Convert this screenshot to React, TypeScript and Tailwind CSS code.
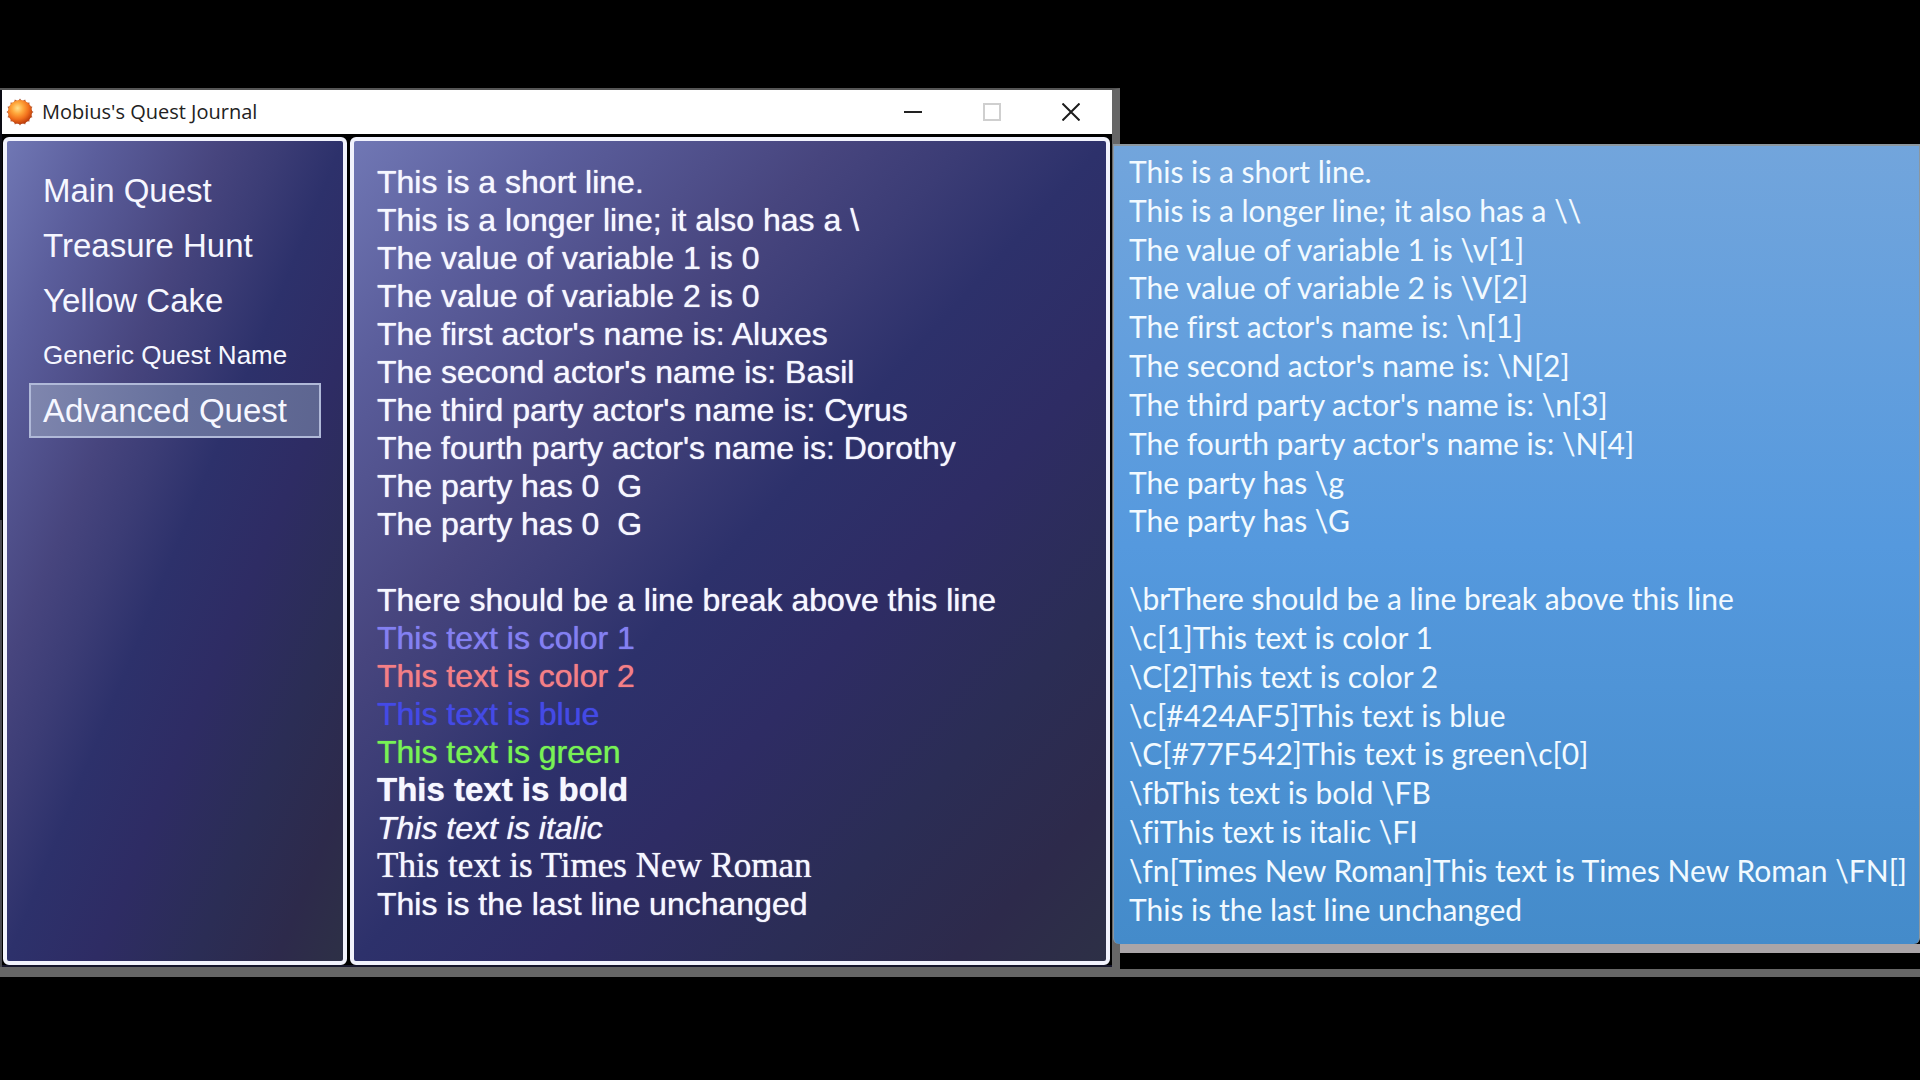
import { useState } from "react";

const quests = ["Main Quest", "Treasure Hunt", "Yellow Cake", "Generic Quest Name", "Advanced Quest"];

const journalLines: { text: string; style?: string }[] = [
  { text: "This is a short line." },
  { text: "This is a longer line; it also has a \\" },
  { text: "The value of variable 1 is 0" },
  { text: "The value of variable 2 is 0" },
  { text: "The first actor's name is: Aluxes" },
  { text: "The second actor's name is: Basil" },
  { text: "The third party actor's name is: Cyrus" },
  { text: "The fourth party actor's name is: Dorothy" },
  { text: "The party has 0  G" },
  { text: "The party has 0  G" },
  { text: "" },
  { text: "There should be a line break above this line" },
  { text: "This text is color 1", style: "text-[#8380f2]" },
  { text: "This text is color 2", style: "text-[#f47f86]" },
  { text: "This text is blue", style: "text-[#444ae6]" },
  { text: "This text is green", style: "text-[#77f255]" },
  { text: "This text is bold", style: "font-bold text-[33px]" },
  { text: "This text is italic", style: "italic" },
  { text: "This text is Times New Roman", style: "font-['Liberation_Serif',serif] text-[35px]" },
  { text: "This is the last line unchanged" },
];

const sourceLines = [
  "This is a short line.",
  "This is a longer line; it also has a \\\\",
  "The value of variable 1 is \\v[1]",
  "The value of variable 2 is \\V[2]",
  "The first actor's name is: \\n[1]",
  "The second actor's name is: \\N[2]",
  "The third party actor's name is: \\n[3]",
  "The fourth party actor's name is: \\N[4]",
  "The party has \\g",
  "The party has \\G",
  "",
  "\\brThere should be a line break above this line",
  "\\c[1]This text is color 1",
  "\\C[2]This text is color 2",
  "\\c[#424AF5]This text is blue",
  "\\C[#77F542]This text is green\\c[0]",
  "\\fbThis text is bold \\FB",
  "\\fiThis text is italic \\FI",
  "\\fn[Times New Roman]This text is Times New Roman \\FN[]",
  "This is the last line unchanged",
];

const pane =
  "rounded-md border-4 border-[#f1f2fc] bg-[linear-gradient(to_bottom_right,#7077b4_0%,#5b5e9c_14%,#47457e_32%,#3b3c75_41%,#2d316b_50%,#2e2c64_63%,#2b2d55_78%,#2d2a4b_90%,#2d3046_100%)] [text-shadow:0_0_1px_currentColor]";

function SunIcon() {
  const teeth = Array.from({ length: 16 }, (_, i) => i * 22.5);
  return (
    <svg viewBox="0 0 28 28" className="size-7 shrink-0" aria-hidden="true">
      <defs>
        <radialGradient id="sun" cx="0.4" cy="0.34" r="0.66">
          <stop offset="0" stopColor="#ffe08c" />
          <stop offset="0.35" stopColor="#ffa83c" />
          <stop offset="0.7" stopColor="#f2701c" />
          <stop offset="1" stopColor="#bf3f0c" />
        </radialGradient>
      </defs>
      {teeth.map((a) => (
        <path key={a} d="M12 3 L14 0.5 L16 3 Z" fill="#b4603c" transform={`rotate(${a} 14 14)`} />
      ))}
      <circle cx="14" cy="14" r="12" fill="url(#sun)" />
    </svg>
  );
}

function TitleBar() {
  const button = "flex h-full w-[79px] items-center justify-center";
  return (
    <header className="flex h-11 items-center bg-white pr-0.5 pl-1">
      <SunIcon />
      <h1 className="ml-2 flex-1 font-['Open_Sans',sans-serif] text-[20px] leading-7 text-[#222]">
        Mobius's Quest Journal
      </h1>
      <button type="button" aria-label="Minimize" className={button}>
        <svg viewBox="0 0 18 18" className="size-[18px]" stroke="#222" strokeWidth="2">
          <path d="M0 9H18" />
        </svg>
      </button>
      <button type="button" aria-label="Maximize" disabled className={button}>
        <svg viewBox="0 0 18 18" className="size-[18px]" stroke="#cfcfcf" strokeWidth="2" fill="none">
          <rect x="1" y="1" width="16" height="16" />
        </svg>
      </button>
      <button type="button" aria-label="Close" className={button}>
        <svg viewBox="0 0 18 18" className="size-[18px]" stroke="#1c1c1c" strokeWidth="2">
          <path d="M0.5 0.5L17.5 17.5M17.5 0.5L0.5 17.5" />
        </svg>
      </button>
    </header>
  );
}

export default function App() {
  const [selected, setSelected] = useState(4);
  return (
    <div className="min-h-screen overflow-x-hidden bg-black pt-[88px] font-['Liberation_Sans',Arial,sans-serif]">
      <main className="grid grid-cols-[1120fr_800fr] border-b-8 border-[#666]">
        <section className="border-t-2 border-r-8 border-b-2 border-[#666] border-t-[#555] bg-black bg-[linear-gradient(#0c0c14_49%,#4a4a50_49%)] pl-0.5">
          <TitleBar />
          <div className="grid grid-cols-[344fr_760fr] gap-[3px] border-b-2 border-[#15152b] bg-black pt-[3px] pr-0.5 pl-px">
            <nav className={pane + " px-[22px] pt-[22px]"}>
              <ul>
                {quests.map((q, i) => (
                  <li key={q}>
                    <button
                      type="button"
                      onClick={() => setSelected(i)}
                      className={
                        "block h-[55px] w-full border-2 px-3 text-left whitespace-nowrap text-[#f6f7ff] " +
                        (i === 3 ? "text-[26px] " : "text-[33px] ") +
                        (i === selected
                          ? "border-[#b0b9d8] bg-[linear-gradient(100deg,#7f86ae,#66709c_50%,#5d6590)]"
                          : "border-transparent")
                      }
                    >
                      {q}
                    </button>
                  </li>
                ))}
              </ul>
            </nav>
            <article className={pane + " px-[23px] pt-[22px] pb-[38px] text-[32px] leading-[38px] text-[#f6f7ff]"}>
              {journalLines.map((l, i) => (
                <p key={i} className={"h-[38px] leading-[38px] whitespace-pre " + (l.style ?? "")}>
                  {l.text}
                </p>
              ))}
            </article>
          </div>
        </section>
        <aside className="relative mt-14 mb-4 -ml-[7px] flex flex-col">
          <div className="flex flex-1 flex-col justify-between rounded-b-md border-t-2 border-r border-l border-[#8c979f] bg-[linear-gradient(#72a5dc,#5599de_50%,#448bca)] pt-1.5 pb-4 pl-[15px] font-['Lato',sans-serif] text-[30px] leading-[38px] text-[#f2faff] [font-variant-ligatures:none]">
            {sourceLines.map((l, i) => (
              <p key={i} className="h-[38px] whitespace-pre">
                {l}
              </p>
            ))}
          </div>
          <div className="ml-[7px] h-[9px] bg-[#aaa5a8]" />
        </aside>
      </main>
    </div>
  );
}
